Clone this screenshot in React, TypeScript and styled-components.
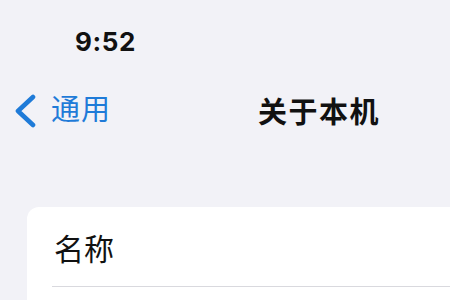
import React from "react";
import styled, { createGlobalStyle } from "styled-components";

const Global = createGlobalStyle`
  html, body {
    margin: 0;
    padding: 0;
    background: #f2f2f7;
  }
  #root {
    width: 450px;
    height: 300px;
    overflow: hidden;
  }
`;

const Screen = styled.div`
  width: 450px;
  height: 300px;
  overflow: hidden;
  background: #f2f2f7;
  display: flex;
  flex-direction: column;
  font-family: "Noto Sans CJK SC", "Noto Sans", sans-serif;
`;

const StatusBar = styled.div`
  height: 56px;
  box-sizing: border-box;
  padding: 27px 0 0 75px;
`;

const Time = styled.span`
  font-family: Inter, "Liberation Sans", sans-serif;
  font-weight: 700;
  font-size: 26px;
  line-height: 30px;
  letter-spacing: 0.6px;
  color: #111;
`;

const NavBar = styled.div`
  margin-top: 33px;
  height: 44px;
  display: flex;
  align-items: center;
  padding-left: 14px;
`;

const BackButton = styled.div`
  display: flex;
  align-items: center;
  gap: 15px;
  color: #1f7bd8;
`;

const BackLabel = styled.span`
  font-size: 29px;
  line-height: 44px;
  letter-spacing: 1px;
  color: #1f7bd8;
  position: relative;
  top: -4px;
`;

const Title = styled.span`
  margin-left: 147px;
  font-size: 29px;
  font-weight: 700;
  line-height: 44px;
  letter-spacing: 1.5px;
  color: #111;
  position: relative;
  top: -1px;
`;

const Card = styled.div`
  margin: 74px -30px 0 27px;
  background: #ffffff;
  border-radius: 12px 12px 0 0;
  flex: 1;
  display: flex;
  flex-direction: column;
`;

const Row = styled.div`
  height: 79px;
  display: flex;
  align-items: center;
  padding-left: 27px;
  font-size: 30px;
  color: #111;
`;

const Separator = styled.div`
  margin-left: 25px;
  height: 1px;
  background: #d9d9de;
`;

function Chevron() {
  return (
    <svg width="22" height="34" viewBox="0 0 22 34" fill="none">
      <path
        d="M19 3 L4 17 L19 31"
        stroke="#1f7bd8"
        strokeWidth="4.6"
        strokeLinecap="round"
        strokeLinejoin="round"
      />
    </svg>
  );
}

export default function App() {
  return (
    <>
      <Global />
      <Screen>
        <StatusBar>
          <Time>9:52</Time>
        </StatusBar>
        <NavBar>
          <BackButton>
            <Chevron />
            <BackLabel>通用</BackLabel>
          </BackButton>
          <Title>关于本机</Title>
        </NavBar>
        <Card>
          <Row>名称</Row>
          <Separator />
        </Card>
      </Screen>
    </>
  );
}
